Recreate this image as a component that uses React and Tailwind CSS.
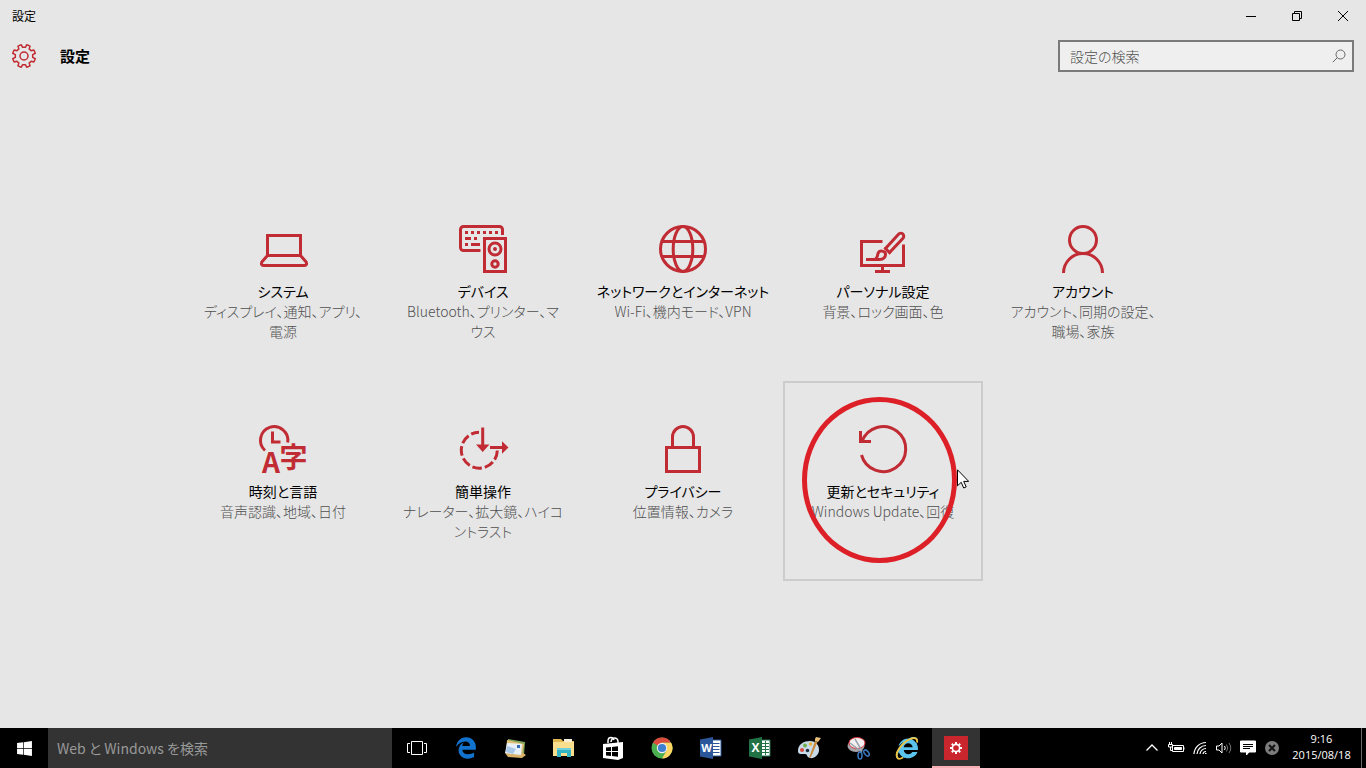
import { FaEdgeLegacy, FaInternetExplorer, FaWindows } from "react-icons/fa6"

const gearPath = (c, outer, inner, teeth = 8) => {
    const step = (Math.PI * 2) / teeth
    const at = (r, a) => `${(c + r * Math.cos(a)).toFixed(2)} ${(c + r * Math.sin(a)).toFixed(2)}`
    let d = ''
    for (let i = 0; i < teeth; i++) {
        const a = i * step + step / 2
        d += `${i === 0 ? 'M' : 'L'}${at(inner, a - step * 0.3)}L${at(outer, a - step * 0.2)}L${at(outer, a + step * 0.2)}L${at(inner, a + step * 0.3)}`
    }
    return d + 'Z'
}

function TileIcon({ children }) {
    return (
        <svg viewBox="0 0 48 48" className="w-12 h-12 overflow-visible text-[#c12c34]" fill="none" stroke="currentColor" strokeWidth="3">
            {children}
        </svg>
    )
}

const SystemIcon = () => (
    <TileIcon>
        <path d="M8.5 31V10.5h33V31" />
        <path d="M8.5 30.5h33L47.2 37q1.2 3.5-2.2 3.5H5Q1.6 40.5 2.8 37Z" />
    </TileIcon>
)

const DevicesIcon = () => (
    <TileIcon>
        <path d="M21.5 25.5H4.5a3 3 0 0 1-3-3v-18a3 3 0 0 1 3-3h36a3 3 0 0 1 3 3V10" />
        <path d="M6 7.5h33.5" strokeDasharray="3 3" />
        <path d="M6 13.5h6M15 13.5h3M6 19.5h3M12 19.5h9" />
        <path d="M25.5 13.5h21v33h-21z" />
        <circle cx="36" cy="24" r="6" />
        <circle cx="36" cy="24" r="2" fill="currentColor" stroke="none" />
        <circle cx="36" cy="39" r="3.2" />
    </TileIcon>
)

const NetworkIcon = () => (
    <TileIcon>
        <circle cx="24" cy="24" r="22.5" />
        <ellipse cx="24" cy="24" rx="9.8" ry="22.5" />
        <path d="M3 16.5h42M3 31.5h42" />
    </TileIcon>
)

const PersonalIcon = () => (
    <TileIcon>
        <path d="M23.5 16.5h-21v24h42V19.500" />
        <path d="M23.5 41v5M16 46.5h15" />
        <path d="M26.5 23.5L39.5 9.2a3 3 0 0 1 4.5 4L30.5 27.5Z" />
        <path d="M25.5 22.5l6 6" strokeWidth="2" />
        <path d="M7 34.5h13.5c4 0 6.3-2.5 6-5.5s-6-4.5-7.5-.5c-.8 2.5-.3 4-2.5 5.5" />
    </TileIcon>
)

const AccountIcon = () => (
    <TileIcon>
        <circle cx="24" cy="15" r="13.5" />
        <path d="M4.5 48a19.5 19.5 0 0 1 39 0" />
    </TileIcon>
)

const TimeIcon = () => (
    <TileIcon>
        <path d="M6 25.5A13.7 13.7 0 1 1 28.7 17.5" />
        <path d="M13.5 6.5v10.5h8" />
        <g fill="currentColor" stroke="none" className="font-bold font-['Noto_Sans_CJK_JP',sans-serif]">
            <text x="3" y="48" fontSize="28">A</text>
            <text x="20.5" y="43" fontSize="28">字</text>
        </g>
    </TileIcon>
)

const EaseIcon = () => (
    <TileIcon>
        <path d="M38.3 25.5A18 18 0 1 1 20 7.2" strokeDasharray="9.6 3" />
        <path d="M23.7 2.5v19M31 22.5h12" />
        <path d="M17 19.5h13.5l-6.8 7.5ZM43 16.2l6.5 6.300-6.5 6.300Z" fill="currentColor" stroke="none" />
    </TileIcon>
)

const PrivacyIcon = () => (
    <TileIcon>
        <path d="M7.5 22.5h33v24h-33z" />
        <path d="M13.5 22V12a10.5 10.5 0 0 1 21 0v10" />
    </TileIcon>
)

const UpdateIcon = () => (
    <TileIcon>
        <path d="M2.5 30A22.5 22.5 0 1 0 3 16.5" />
        <path d="M1.5 6v10.5H12" />
    </TileIcon>
)

const tiles = [
    { title: 'システム', lines: ['ディスプレイ、通知、アプリ、', '電源'], Icon: SystemIcon },
    { title: 'デバイス', lines: ['Bluetooth、プリンター、マ', 'ウス'], Icon: DevicesIcon },
    { title: 'ネットワークとインターネット', lines: ['Wi-Fi、機内モード、VPN'], Icon: NetworkIcon },
    { title: 'パーソナル設定', lines: ['背景、ロック画面、色'], Icon: PersonalIcon },
    { title: 'アカウント', lines: ['アカウント、同期の設定、', '職場、家族'], Icon: AccountIcon },
    { title: '時刻と言語', lines: ['音声認識、地域、日付'], Icon: TimeIcon },
    { title: '簡単操作', lines: ['ナレーター、拡大鏡、ハイコ', 'ントラスト'], Icon: EaseIcon },
    { title: 'プライバシー', lines: ['位置情報、カメラ'], Icon: PrivacyIcon },
    { title: '更新とセキュリティ', lines: ['Windows Update、回復'], Icon: UpdateIcon, active: true },
]

function Tile({ title, lines, Icon, active }) {
    return (
        <button type="button" className={`relative h-[200px] border-2 pt-[42px] flex flex-col items-center text-sm leading-5 whitespace-nowrap ${active ? 'border-[#cccccc]' : 'border-transparent'}`}>
            <Icon />
            <span className="mt-2 text-black">{title}</span>
            {lines.map(line => (
                <span key={line} className="font-light text-[#4f4f4f]">{line}</span>
            ))}
            {active && <Marker />}
        </button>
    )
}

function Marker() {
    return (
        <>
            <span className="absolute left-[17px] top-[14px] w-[155px] h-[166px] rounded-[50%] border-[5px] border-[#dd2027]" />
            <svg viewBox="0 0 12 20" className="absolute left-[172px] top-[86px] w-3 h-5" fill="#fff" stroke="#000">
                <path d="M.5.8v16l3.7-3.5 2.5 5.7 2.5-1.1-2.5-5.5h5z" />
            </svg>
        </>
    )
}

function TitleBar() {
    return (
        <div className="h-8 flex items-center justify-between text-black">
            <p className="pl-3 text-xs">設定</p>
            <div className="flex">
                <button type="button" aria-label="最小化" className="w-[46px] h-8 flex items-center justify-center">
                    <svg viewBox="0 0 10 10" className="w-[10px] h-[10px]" stroke="currentColor"><path d="M0 5.5h10" /></svg>
                </button>
                <button type="button" aria-label="元に戻す" className="w-[46px] h-8 flex items-center justify-center">
                    <svg viewBox="0 0 10 10" className="w-[10px] h-[10px]" fill="none" stroke="currentColor"><path d="M.5 2.5h7v7h-7zM2.5 2.5v-2h7v7h-2" /></svg>
                </button>
                <button type="button" aria-label="閉じる" className="w-[46px] h-8 flex items-center justify-center">
                    <svg viewBox="0 0 10 10" className="w-[10px] h-[10px]" stroke="currentColor"><path d="M0 0l10 10M10 0L0 10" /></svg>
                </button>
            </div>
        </div>
    )
}

function Header() {
    return (
        <header className="h-12 px-3 flex items-center justify-between">
            <div className="flex items-center gap-6">
                <svg viewBox="0 0 24 24" className="w-6 h-6 text-[#c12c34]" fill="none" stroke="currentColor" strokeWidth="1.5" strokeLinejoin="round">
                    <path d={gearPath(12, 11.6, 8.8)} />
                    <circle cx="12" cy="12" r="4" />
                </svg>
                <h1 className="text-[15px] leading-5 font-bold text-black">設定</h1>
            </div>
            <div className="w-[296px] h-8 px-[10px] flex items-center gap-2 border-2 border-[#7a7a7a] bg-[#efefef]">
                <input type="text" aria-label="設定の検索" placeholder="設定の検索" className="flex-1 min-w-0 text-sm font-light outline-none placeholder:text-[#4f4f4f]" />
                <svg viewBox="0 0 14 14" className="w-[14px] h-[14px] -mr-1 text-[#666666]" fill="none" stroke="currentColor">
                    <circle cx="8.5" cy="5.5" r="4.5" />
                    <path d="M5.3 8.7L.8 13.2" />
                </svg>
            </div>
        </header>
    )
}

const TaskViewIcon = () => (
    <svg viewBox="0 0 20 14" className="w-5 h-[14px]" fill="none" stroke="#fff">
        <path d="M4.5.5h11v13h-11zM3 2.5H.5v9H3M17 2.5h2.5v9H17" />
    </svg>
)

const MailIcon = () => (
    <svg viewBox="0 0 24 24" className="w-6 h-6">
        <path d="M5 3l17 3-1 13L4 16z" fill="#7fa65a" />
        <path d="M4 4l17 4-2 11L3 16z" fill="#e3c078" />
        <path d="M2 17l4-2 14 2 3 2-4 3-14-1z" fill="#d9b46a" />
        <path d="M4 7l15 1-1 11L2 17z" fill="#e8f1fa" />
        <path d="M4 10l9 3-3 5-7-2z" fill="#a9c8e8" />
        <path d="M14 9h3v3h-3z" fill="#2f6cb3" />
    </svg>
)

const FolderIcon = () => (
    <svg viewBox="0 0 24 24" className="w-6 h-6">
        <path d="M1 3h8l2 2h11v4H1z" fill="#e0b84f" />
        <path d="M12 3h8v3h-8z" fill="#f7f0d8" />
        <path d="M1 6h21v14H1z" fill="#f8de8d" />
        <path d="M5 12h14v9h-4v-4H9v4H5z" fill="#35b4c6" />
        <path d="M5 12h14v2H5z" fill="#6fd0dc" />
    </svg>
)

const StoreIcon = () => (
    <svg viewBox="0 0 24 24" className="w-6 h-6">
        <path d="M7 7V5q0-3.5 3-3.5 2.5 0 3 2.5M10 6q.5-4 3.5-4T17 5v2" fill="none" stroke="#fff" strokeWidth="1.5" />
        <path d="M2 8l20-2v16l-5 2-15-2z" fill="#fff" />
        <path d="M5 11.5l5-.5v4H5zM11 10.9l6-.6V15h-6zM5 16h5v4l-5-.5zM11 16h6v4.7l-6-.6z" fill="#000" />
    </svg>
)

const ChromeIcon = () => (
    <svg viewBox="0 0 24 24" className="w-6 h-6">
        <circle cx="12" cy="12" r="10.5" fill="#4caf50" />
        <path d="M12 12L2.9 6.7A10.5 10.5 0 0 1 21.1 6.7H12z" fill="#dd4b3e" />
        <path d="M12 6.7h9.1A10.5 10.5 0 0 1 12 22.5l4.6-7.8z" fill="#fdd663" />
        <circle cx="12" cy="12" r="5.2" fill="#f1f1f1" />
        <circle cx="12" cy="12" r="4.1" fill="#3f7fd0" />
    </svg>
)

const WordIcon = () => (
    <svg viewBox="0 0 24 24" className="w-6 h-6">
        <path d="M13 4h9v16h-9z" fill="#fff" stroke="#2b579a" />
        <path d="M14 7.5h6.5M14 10.5h6.5M14 13.5h6.5M14 16.5h6.500" stroke="#2b579a" />
        <path d="M1 3.5L14 1v22L1 20.5z" fill="#2b579a" />
        <text x="7.5" y="16" textAnchor="middle" fontSize="11" fill="#fff" className="font-bold font-['Open_Sans',sans-serif]">W</text>
    </svg>
)

const ExcelIcon = () => (
    <svg viewBox="0 0 24 24" className="w-6 h-6">
        <path d="M13 4h9v16h-9z" fill="#fff" stroke="#217346" />
        <path d="M14 7.5h7M14 10.5h7M14 13.5h7M14 16.5h7M17.5 5v14" stroke="#217346" />
        <path d="M1 3.5L14 1v22L1 20.5z" fill="#217346" />
        <text x="7.5" y="16" textAnchor="middle" fontSize="12" fill="#fff" className="font-bold font-['Open_Sans',sans-serif]">X</text>
    </svg>
)

const PaintIcon = () => (
    <svg viewBox="0 0 24 24" className="w-6 h-6">
        <path d="M1 15C1 8 7 5 13 5s9 4 9 9-5 9-9 8-2-4-5-4-7 1-7-3z" fill="#c9dbe8" />
        <circle cx="5" cy="14" r="2" fill="#d8483b" />
        <circle cx="8" cy="9.5" r="2" fill="#6fb04a" />
        <circle cx="13.5" cy="8" r="1.8" fill="#e9b23c" />
        <circle cx="10.5" cy="14.5" r="1.8" fill="#1f2f3f" />
        <path d="M18 5l2.5 1L14 21l-2 1z" fill="#c98c3c" />
        <path d="M18 3l1-2 5 1-3 4-3-1z" fill="#e8bf7a" />
    </svg>
)

const SnipIcon = () => (
    <svg viewBox="0 0 24 24" className="w-6 h-6" fill="none">
        <ellipse cx="10" cy="10" rx="8.5" ry="6" fill="#a8a3a8" />
        <ellipse cx="11" cy="7" rx="8" ry="5.5" fill="#f4f0f2" stroke="#d8353a" />
        <path d="M4 7l12 9M9 3l7 12" stroke="#9aa3ad" strokeWidth="1.5" />
        <ellipse cx="14" cy="19.5" rx="2" ry="3.5" stroke="#3b78c0" strokeWidth="1.5" />
        <ellipse cx="20.5" cy="17" rx="2" ry="3.5" transform="rotate(-40 20.5 17)" stroke="#3b78c0" strokeWidth="1.5" />
    </svg>
)

const IeIcon = () => (
    <span className="relative w-6 h-6 flex items-center justify-center">
        <FaInternetExplorer className="w-[22px] h-[22px] text-[#5cc5ee]" />
        <svg viewBox="0 0 24 24" className="absolute inset-0 w-6 h-6" fill="none" stroke="#f2c53d" strokeWidth="1.8">
            <path d="M22 6.5Q23 1 16.5 2.5 9.5 5 4.5 12T3 22.5q1.5 1 5-1" />
        </svg>
    </span>
)

const SettingsAppIcon = () => (
    <span className="w-6 h-6 flex items-center justify-center bg-[#c9262e]">
        <svg viewBox="0 0 14 14" className="w-[14px] h-[14px]" fill="none" stroke="#fff">
            <circle cx="7" cy="7" r="3.6" strokeWidth="1.6" />
            <path d="M11 7h2M9.8 9.8l1.4 1.4M7 11v2M4.2 9.8l-1.400 1.400M3 7H1M4.2 4.2L2.8 2.8M7 3V1M9.8 4.2l1.4-1.400" strokeWidth="2" />
        </svg>
    </span>
)

const apps = [
    { name: 'タスク ビュー', icon: <TaskViewIcon /> },
    { name: 'Microsoft Edge', icon: <FaEdgeLegacy className="w-[22px] h-[22px] text-[#1273cf]" /> },
    { name: 'メール', icon: <MailIcon /> },
    { name: 'エクスプローラー', icon: <FolderIcon /> },
    { name: 'ストア', icon: <StoreIcon /> },
    { name: 'Google Chrome', icon: <ChromeIcon /> },
    { name: 'Word', icon: <WordIcon /> },
    { name: 'Excel', icon: <ExcelIcon /> },
    { name: 'ペイント', icon: <PaintIcon /> },
    { name: 'Snipping Tool', icon: <SnipIcon /> },
    { name: 'Internet Explorer', icon: <IeIcon /> },
    { name: '設定', icon: <SettingsAppIcon />, active: true },
]

const tray = [
    {
        name: '隠れているインジケーター', icon: (
            <path d="M2.5 10.5L8 5l5.5 5.5" strokeWidth="1.3" />
        )
    },
    {
        name: 'バッテリー', icon: (
            <>
                <path d="M4.5 5.5h11v6h-11z" />
                <path d="M6.5 7.5h7v2h-7z" fill="currentColor" />
                <path d="M16 7.5v2M.5 4.5h4v2.5h-4zM1.5 4V2M3.5 4V2M2.5 7v3.5h2" />
            </>
        )
    },
    {
        name: 'ネットワーク', icon: (
            <path d="M2 14A12 12 0 0 1 14 2.5M5 14a9 9 0 0 1 9-8.5M8 14a6 6 0 0 1 6-5.5M11 14a3 3 0 0 1 3-2.5M13 13.5h1.5" strokeWidth="1.2" />
        )
    },
    {
        name: '音量', icon: (
            <>
                <path d="M.5 6h2.5l3-3v10l-3-3H.5zM8.5 6q1.5 2 0 4" />
                <path d="M10.5 4.5q2.5 3.5 0 7M13 3q3.5 5 0 10" opacity=".45" />
            </>
        )
    },
    {
        name: '通知', icon: (
            <>
                <path d="M.5 1h15v11H9l-2.5 3V12h-6z" fill="currentColor" />
                <path d="M3 4.5h10M3 6.5h10M3 8.5h7" stroke="#000" />
            </>
        )
    },
    {
        name: '切断', icon: (
            <>
                <circle cx="8" cy="8" r="7" fill="#7d7d7d" stroke="none" />
                <path d="M5 5l6 6M11 5l-6 6" stroke="#111" strokeWidth="2" />
            </>
        )
    },
]

function Taskbar() {
    return (
        <footer className="h-10 flex items-stretch bg-black text-white">
            <button type="button" aria-label="スタート" className="w-12 flex items-center justify-center">
                <FaWindows className="w-[17px] h-[17px]" />
            </button>
            <input type="text" aria-label="検索" placeholder="Web と Windows を検索" className="w-[344px] px-[9px] text-sm bg-[#333333] outline-none placeholder:text-[#999999]" />
            <div className="flex gap-px pl-px">
                {apps.map(app => (
                    <button key={app.name} type="button" aria-label={app.name} className={`w-12 flex items-center justify-center border-y-2 border-t-transparent ${app.active ? 'bg-[#333333] border-b-[#f4b0b3]' : 'border-b-transparent'}`}>
                        {app.icon}
                    </button>
                ))}
            </div>
            <div className="ml-auto flex items-stretch">
                {tray.map(item => (
                    <button key={item.name} type="button" aria-label={item.name} className="w-6 flex items-center justify-center">
                        <svg viewBox="0 0 16 16" className="w-4 h-4 overflow-visible" fill="none" stroke="currentColor">{item.icon}</svg>
                    </button>
                ))}
                <div className="w-[77px] pr-0.5 pb-0.5 flex flex-col items-center justify-center text-[11px] leading-4 font-['Open_Sans',sans-serif]">
                    <p>9:16</p>
                    <p>2015/08/18</p>
                </div>
                <div className="w-[5px] border-l border-[#6b6b6b]" />
            </div>
        </footer>
    )
}

export default function App() {
    return (
        <div className="min-h-screen flex flex-col bg-[#e6e6e6] font-['Noto_Sans_CJK_JP',sans-serif] [font-feature-settings:'palt']">
            <TitleBar />
            <Header />
            <main className="flex-1 pt-[101px] pb-10">
                <div className="mx-auto w-fit grid grid-cols-[repeat(5,200px)]">
                    {tiles.map(tile => (
                        <Tile key={tile.title} {...tile} />
                    ))}
                </div>
            </main>
            <Taskbar />
        </div>
    )
}
